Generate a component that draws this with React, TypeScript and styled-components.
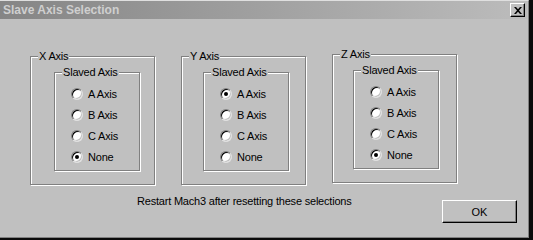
import React, { useState } from "react";
import styled, { createGlobalStyle } from "styled-components";

const GlobalStyle = createGlobalStyle`
  html, body {
    margin: 0;
    padding: 0;
    background: #0a0a0a;
  }
  body {
    font-family: "Liberation Sans", Arial, sans-serif;
    font-size: 11px;
    letter-spacing: -0.2px;
    color: #000;
  }
`;

const Window = styled.div`
  width: 529px;
  height: 238px;
  box-sizing: border-box;
  background: #c0c0c0;
  border-top: 1px solid #dfdfdf;
  border-right: 1px solid #808080;
  border-bottom: 1px solid #808080;
  display: flex;
  flex-direction: column;
`;

const TitleBar = styled.div`
  height: 18px;
  margin-right: 1px;
  background: linear-gradient(to right, #858585, #bcbcbc);
  display: flex;
  align-items: center;
  padding: 0 2px 0 3px;
`;

const Title = styled.span`
  flex: 1;
  color: #cfcfcf;
  font-weight: bold;
  font-size: 12px;
  letter-spacing: 0;
  line-height: 18px;
`;

const CloseButton = styled.button`
  width: 15px;
  height: 14px;
  padding: 0;
  margin: 0;
  box-sizing: border-box;
  background: #c0c0c0;
  border: 1px solid;
  border-color: #fff #000 #000 #fff;
  box-shadow: inset -1px -1px 0 #808080;
  display: flex;
  align-items: center;
  justify-content: center;
`;

const Body = styled.div`
  flex: 1;
  display: flex;
  flex-direction: column;
`;

const GroupRow = styled.div`
  display: flex;
  align-items: flex-start;
  gap: 26px;
  padding: 37px 0 0 30px;
`;

const GroupBox = styled.div<{ $w: number; $h: number; $pad: string; $lift?: number }>`
  position: relative;
  box-sizing: border-box;
  width: ${(p) => p.$w}px;
  height: ${(p) => p.$h}px;
  padding: ${(p) => p.$pad};
  margin-top: ${(p) => -(p.$lift ?? 0)}px;
  border: 1px solid #808080;
  box-shadow: 1px 1px 0 #fff, inset 1px 1px 0 #fff;
`;

const GroupLabel = styled.span`
  position: absolute;
  top: -7px;
  left: 7px;
  padding: 0 1px;
  background: #c0c0c0;
  line-height: 13px;
  white-space: nowrap;
`;

const RadioRow = styled.label`
  display: flex;
  align-items: center;
  height: 21px;
  gap: 5px;
  cursor: default;
`;

const RadioCircle = styled.span<{ $on: boolean }>`
  position: relative;
  width: 12px;
  height: 12px;
  box-sizing: border-box;
  border-radius: 50%;
  border: 1px solid;
  border-color: #808080 #dfdfdf #dfdfdf #808080;
  background: #fff;
  box-shadow: inset 1px 1px 0 #000, inset -1px -1px 0 #c0c0c0;

  &::after {
    content: "";
    display: ${(p) => (p.$on ? "block" : "none")};
    position: absolute;
    left: 3px;
    top: 3px;
    width: 4px;
    height: 4px;
    border-radius: 50%;
    background: #000;
  }
`;

const Footer = styled.div`
  display: flex;
  align-items: flex-start;
  margin-top: 10px;
  padding-left: 137px;
`;

const Note = styled.span`
  line-height: 13px;
`;

const OkButton = styled.button`
  margin: 5px 11px 0 auto;
  width: 75px;
  height: 23px;
  box-sizing: border-box;
  background: #c0c0c0;
  border: 1px solid;
  border-color: #fff #000 #000 #fff;
  box-shadow: inset -1px -1px 0 #808080;
  font-family: "Liberation Sans", Arial, sans-serif;
  font-size: 11px;
  color: #000;
  padding: 0;
`;

const OPTIONS = ["A Axis", "B Axis", "C Axis", "None"];

const AXES = [
  { name: "X Axis", init: "None", outerPad: "15px 0 0 23px", lift: 0 },
  { name: "Y Axis", init: "A Axis", outerPad: "15px 0 0 21px", lift: 0 },
  { name: "Z Axis", init: "None", outerPad: "15px 0 0 20px", lift: 2 },
];

function AxisGroup({
  name,
  init,
  outerPad,
  lift,
}: {
  name: string;
  init: string;
  outerPad: string;
  lift: number;
}) {
  const [value, setValue] = useState(init);
  return (
    <GroupBox $w={125} $h={129} $pad={outerPad} $lift={lift}>
      <GroupLabel>{name}</GroupLabel>
      <GroupBox $w={86} $h={99} $pad="10px 0 0 16px">
        <GroupLabel>Slaved Axis</GroupLabel>
        {OPTIONS.map((opt) => (
          <RadioRow key={opt} onClick={() => setValue(opt)}>
            <RadioCircle $on={value === opt} />
            <span>{opt}</span>
          </RadioRow>
        ))}
      </GroupBox>
    </GroupBox>
  );
}

export default function App() {
  return (
    <>
      <GlobalStyle />
      <Window>
        <TitleBar>
          <Title>Slave Axis Selection</Title>
          <CloseButton aria-label="Close">
            <svg width="8" height="7" viewBox="0 0 8 7">
              <path d="M0 0h2l2 2.2L6 0h2L5 3.5 8 7H6L4 4.8 2 7H0l3-3.5z" fill="#000" />
            </svg>
          </CloseButton>
        </TitleBar>
        <Body>
          <GroupRow>
            {AXES.map((a) => (
              <AxisGroup key={a.name} {...a} />
            ))}
          </GroupRow>
          <Footer>
            <Note>Restart Mach3 after resetting these selections</Note>
            <OkButton>OK</OkButton>
          </Footer>
        </Body>
      </Window>
    </>
  );
}
